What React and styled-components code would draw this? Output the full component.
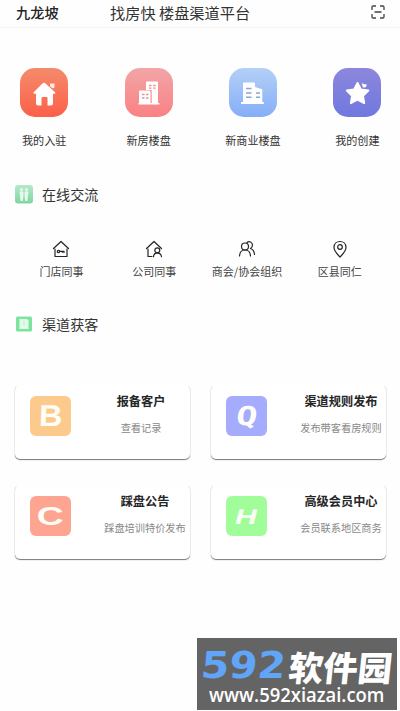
import React from 'react';
import styled, { createGlobalStyle } from 'styled-components';

const GlobalStyle = createGlobalStyle`
  * { box-sizing: border-box; }
  body {
    margin: 0;
    background: #fefefe;
    color: #333;
    font-family: "Noto Sans CJK SC", sans-serif;
  }
`;

const Page = styled.div`
  position: relative;
  width: 400px;
  height: 711px;
  overflow: hidden;
`;

const Header = styled.header`
  display: grid;
  grid-template-columns: 94px 1fr 14px;
  align-items: center;
  height: 28px;
  padding: 0 15px 4px 16px;
  border-bottom: 1px solid #f3f3f3;
  white-space: nowrap;
`;

const City = styled.div`
  font-size: 14.2px;
  font-weight: 500;
  line-height: 20px;
  color: #222;
`;

const Title = styled.h1`
  margin: 0;
  font-size: 15.2px;
  font-weight: 400;
  line-height: 20px;
  color: #333;
`;

const Shortcuts = styled.nav`
  display: grid;
  grid-template-columns: repeat(4, 104.4px);
  height: 117px;
  margin-left: -8px;
  padding-top: 40px;
`;

const Shortcut = styled.div`
  display: flex;
  flex-direction: column;
  align-items: center;
  gap: 14px;
  font-size: 11.1px;
  line-height: 18px;
  white-space: nowrap;
`;

const Tile = styled.div`
  width: 48px;
  height: 49px;
  border-radius: 15px;
  background: linear-gradient(${props => props.$from}, ${props => props.$to});
  svg { display: block; }
`;

const SectionTitle = styled.h2`
  display: flex;
  align-items: center;
  gap: 9px;
  height: 22px;
  margin: ${props => props.$top}px 0 0 15px;
  font-size: 14.1px;
  font-weight: 400;
  line-height: 22px;
`;

const Contacts = styled.div`
  display: grid;
  grid-template-columns: repeat(4, 92.8px);
  margin: 35px 0 0 15px;
`;

const Contact = styled.div`
  display: flex;
  flex-direction: column;
  align-items: center;
  gap: 4px;
  font-size: 11px;
  line-height: 18px;
  white-space: nowrap;
  color: #444;
`;

const Cards = styled.div`
  display: grid;
  grid-template-columns: 175px 175px;
  gap: 26px 21px;
  margin: 50px 0 0 15px;
`;

const Card = styled.div`
  display: flex;
  height: 74px;
  padding: 11px 0 0 15px;
  border-radius: 5px;
  background: #fff;
  box-shadow: 0 1px 1px #777, 0 0 1px #bbb;
  clip-path: inset(1px -3px -3px -3px);
`;

const Badge = styled.div`
  display: flex;
  flex: none;
  align-items: center;
  justify-content: center;
  width: 41px;
  height: 40px;
  border-radius: 6px;
  background: ${props => props.$color};
`;

const Letter = styled.span`
  font-family: ${props => props.$font || '"Liberation Sans"'}, sans-serif;
  font-size: ${props => props.$size}px;
  font-weight: 700;
  line-height: 1;
  color: #fffdf8;
  transform: skewX(${props => props.$skew}deg) scaleX(${props => props.$stretch});
`;

const CardText = styled.div`
  flex: none;
  width: 100px;
  margin-left: ${props => props.$indent}px;
  text-align: center;
  white-space: nowrap;
`;

const CardTitle = styled.div`
  margin-top: -4px;
  font-size: 12.2px;
  font-weight: 700;
  line-height: 18px;
  color: #262626;
`;

const CardNote = styled.div`
  margin-top: 10px;
  font-size: 10.2px;
  line-height: 16px;
  color: #888;
`;

// Site mark laid over the bottom corner
const Watermark = styled.div`
  position: absolute;
  right: 3px;
  bottom: 1px;
  width: 200px;
  height: 72px;
  padding-top: 11px;
  background: #646464;
  color: #fff;
  white-space: nowrap;
`;

const Brand = styled.div`
  display: flex;
  align-items: center;
  height: 34px;
  padding-left: 4px;
`;

const BrandNumber = styled.span`
  width: 88px;
  font-family: "DejaVu Sans", sans-serif;
  font-size: 37px;
  font-weight: 700;
  line-height: 34px;
  color: #61a5f8;
  transform: skewX(-5deg) scaleX(1.1);
  transform-origin: left center;
`;

const BrandName = styled.span`
  font-size: 34.5px;
  font-weight: 900;
  line-height: 34px;
  transform: skewX(-6deg);
`;

const Site = styled.div`
  margin-left: 12px;
  font-family: "Open Sans", sans-serif;
  font-size: 19.5px;
  font-weight: 600;
  line-height: 24px;
  transform: scaleX(0.945);
  transform-origin: left center;
`;

const shortcuts = [
  { label: '我的入驻', icon: 'home', from: '#f58a6b', to: '#fc6049' },
  { label: '新房楼盘', icon: 'building', from: '#f2a5a7', to: '#fa8183' },
  { label: '新商业楼盘', icon: 'office', from: '#b4d0f6', to: '#85aef8' },
  { label: '我的创建', icon: 'star', from: '#8c87dc', to: '#7078df' },
];

const contacts = [
  { label: '门店同事', icon: 'store' },
  { label: '公司同事', icon: 'company' },
  { label: '商会/协会组织', icon: 'group' },
  { label: '区县同仁', icon: 'pin' },
];

const cards = [
  { letter: 'B', color: '#fdca8d', title: '报备客户', note: '查看记录', indent: 20, size: 30, skew: -2, stretch: 1.08 },
  { letter: 'Q', color: '#a5acfe', title: '渠道规则发布', note: '发布带客看房规则', indent: 24, size: 26, skew: -7, stretch: 1.35, font: '"DejaVu Sans Mono"' },
  { letter: 'C', color: '#fea592', title: '踩盘公告', note: '踩盘培训特价发布', indent: 24, size: 25, skew: 0, stretch: 1.48 },
  { letter: 'H', color: '#a0fd99', title: '高级会员中心', note: '会员联系地区商务', indent: 24, size: 21, skew: -15, stretch: 1.45 },
];

function ScanIcon() {
  return (
    <svg width="14" height="14" viewBox="0 0 14 14" fill="none" stroke="#444" strokeWidth="1.3">
      <path d="M1 5V2.2Q1 1 2.2 1H5M9 1h2.8Q13 1 13 2.2V5M13 9v2.8q0 1.2-1.2 1.2H9M5 13H2.2Q1 13 1 11.8V9M3.500 7h7" />
    </svg>
  );
}

function TileIcon({ name }) {
  return (
    <svg width="48" height="49" viewBox="0 0 48 49" fill="#fff">
      {name === 'home' && <>
        <path d="M22.5 15.5q1.5-1.4 3 0l9 8.2q2 2-.8 2.1h-.7V35q0 2.5-2.5 2.5h-3V30q0-1-1-1h-4q-1 0-1 1v7.5h-3Q16 37.500 16 35v-9.200h-1q-2.800-.1-.8-2.100z" />
        <path d="M30 15.500h4.500v4l-1.500 1-3-2z" opacity=".85" />
      </>}
      {name === 'building' && <>
        <path d="M21 22v-7.500q0-1 1-1h10q1 0 1 1V35h1.500v1.500h-21V35H14V23.500q0-1 1-1h9q1.500 0 1.500 1.500v11h1.200V22z" />
        <path stroke="#e99294" strokeWidth="1.300" d="M24 17.500h2.500M28.200 17.500h2.500M24 20.200h2.500M28.200 20.200h2.500M17 26.500h2.500M21 26.500h2.500M17 30h2.500M21 30h2.500" />
      </>}
      {name === 'office' && <>
        <path d="M14 15.500q0-1 1-1h10q1 0 1 1V19l6.500 2q.8.200.8 1V34h1.500v2H12v-2h2z" />
        <path stroke="#82a8df" strokeWidth="1.600" d="M17 20.500h5.500M17 25h5.500M17 29.300h5.500M27 25h4M27 29.300h4" />
      </>}
      {name === 'star' && <>
        <path stroke="#fff" strokeWidth="2" strokeLinejoin="round" d="m24.500 15 3.400 6.500 7.400 1.100-5.300 5.200 1.200 7.300-6.700-3.400-6.600 3.400 1.200-7.300-5.300-5.200 7.400-1.100z" />
        <path d="M29 18q-1-3 1-3.500 0 2 3.300 1.400 1-.2.700 1.500-1.500 4-4.500 1.800z" stroke="#7c7dda" strokeWidth=".7" />
      </>}
    </svg>
  );
}

function ContactIcon({ name }) {
  return (
    <svg width="18" height="18" viewBox="0 0 18 18" fill="none" stroke="#252525" strokeWidth="1.200" strokeLinecap="round" strokeLinejoin="round">
      {name === 'store' && <>
        <path d="m1.500 8.500 7.500-7 7.500 7M3 9V16.500h12V9" />
        <circle cx="6.500" cy="11.500" r="1.200" />
        <path d="M7.800 11.300H12v1.300M10.300 11.300v1" />
      </>}
      {name === 'company' && <>
        <path d="m1.500 8.500 7.500-7 7.500 7M3 9V16.500h4" />
        <circle cx="12.300" cy="10.300" r="2.500" />
        <path d="M8.500 16.700c.2-2.700 1.600-3.900 3.800-3.900s3.800 1.200 4.200 3.900" />
      </>}
      {name === 'group' && <>
        <circle cx="7" cy="6.500" r="3.500" />
        <path d="M1.500 16c.2-3.800 2.400-6 5.500-6s5.300 2.200 5.500 6M9 2.500c2-1.700 5.500-.5 5.500 2.500 0 1.700-.8 2.900-2 3.500 2.500.8 3.800 2.800 4 6" />
      </>}
      {name === 'pin' && <>
        <path d="M9 17C5.500 13.500 3 10.500 3 7.500c0-8 12-8 12 0 0 3-2.500 6-6 9.500Z" />
        <circle cx="9" cy="7" r="2.300" />
      </>}
    </svg>
  );
}

function ChatIcon() {
  return (
    <svg width="18" height="19" viewBox="0 0 18 19">
      <defs>
        <linearGradient id="chat" x2="0" y2="1">
          <stop stopColor="#b5e8c9" />
          <stop offset="1" stopColor="#7ed7a2" />
        </linearGradient>
      </defs>
      <rect width="18" height="18.500" rx="3" fill="url(#chat)" />
      <g fill="#e5faec">
        <circle cx="6.500" cy="4.500" r="1.600" />
        <circle cx="11.500" cy="4.500" r="1.600" />
        <path d="M4.500 6.500h4v4L7.800 16H5.600l-.6-5.500zM9.500 6.500h4L13 10.500l-.6 5.500h-2.200l-.7-5.500z" />
      </g>
    </svg>
  );
}

function ChannelIcon() {
  return (
    <svg width="18" height="16" viewBox="0 0 18 16">
      <rect x="1" y=".5" width="16" height="15" rx="1.500" fill="#7ce59d" />
      <path d="M4.500 3h7.500l1.500 1.500v8.500h-9z" fill="#e4fbe9" />
      <path d="M8 5.500h1.500M8 8h2" stroke="#a9edbc" />
    </svg>
  );
}

export default function App() {
  return (
    <Page>
      <GlobalStyle />
      <Header>
        <City>九龙坡</City>
        <Title>找房快 楼盘渠道平台</Title>
        <ScanIcon />
      </Header>

      <Shortcuts>
        {shortcuts.map(item => (
          <Shortcut key={item.label}>
            <Tile $from={item.from} $to={item.to}><TileIcon name={item.icon} /></Tile>
            {item.label}
          </Shortcut>
        ))}
      </Shortcuts>

      <SectionTitle $top={38}><ChatIcon />在线交流</SectionTitle>
      <Contacts>
        {contacts.map(item => (
          <Contact key={item.label}>
            <ContactIcon name={item.icon} />
            {item.label}
          </Contact>
        ))}
      </Contacts>

      <SectionTitle $top={33}><ChannelIcon />渠道获客</SectionTitle>
      <Cards>
        {cards.map(card => (
          <Card key={card.letter}>
            <Badge $color={card.color}>
              <Letter $size={card.size} $skew={card.skew} $stretch={card.stretch} $font={card.font}>{card.letter}</Letter>
            </Badge>
            <CardText $indent={card.indent}>
              <CardTitle>{card.title}</CardTitle>
              <CardNote>{card.note}</CardNote>
            </CardText>
          </Card>
        ))}
      </Cards>

      <Watermark>
        <Brand>
          <BrandNumber>592</BrandNumber>
          <BrandName>软件园</BrandName>
        </Brand>
        <Site>www.592xiazai.com</Site>
      </Watermark>
    </Page>
  );
}
